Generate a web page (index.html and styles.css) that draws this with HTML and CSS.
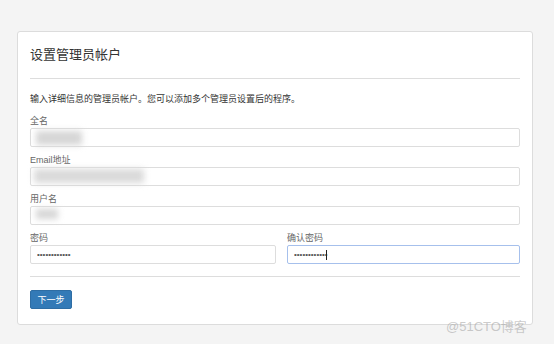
FILE: index.html
```html
<!DOCTYPE html>
<html lang="zh-CN">

<head>
  <meta charset="UTF-8">
  <title>设置管理员帐户</title>
  <link rel="stylesheet" href="styles.css">
</head>

<body>
  <div class="panel">
    <h2 class="title">设置管理员帐户</h2>
    <hr>
    <p class="intro">输入详细信息的管理员帐户。您可以添加多个管理员设置后的程序。</p>

    <!-- fields -->
    <div class="field">
      <label>全名</label>
      <div class="input-wrap">
        <input type="text" value="">
        <span class="smudge smudge-name"></span>
      </div>
    </div>
    <div class="field">
      <label>Email地址</label>
      <div class="input-wrap">
        <input type="text" value="">
        <span class="smudge smudge-mail"></span>
      </div>
    </div>
    <div class="field">
      <label>用户名</label>
      <div class="input-wrap">
        <input type="text" value="">
        <span class="smudge smudge-user"></span>
      </div>
    </div>
    <div class="field-row">
      <div class="field">
        <label>密码</label>
        <input type="password" value="xxxxxxxxxxxx">
      </div>
      <div class="field">
        <label>确认密码</label>
        <div class="input-wrap">
          <input class="focus" type="password" value="xxxxxxxxxxxx">
          <span class="caret"></span>
        </div>
      </div>
    </div>

    <hr class="bottom">
    <button class="btn-next">下一步</button>
  </div>

  <div class="watermark">@51CTO博客</div>
</body>

</html>
```

FILE: styles.css
```css
/* reset */
html,
body {
  margin: 0;
  padding: 0;
}

body {
  width: 554px;
  height: 344px;
  background: #f4f4f4;
  font-family: "Liberation Sans", "Noto Sans CJK SC", sans-serif;
  color: #333;
  overflow: hidden;
}

/* panel */
.panel {
  width: 490px;
  margin: 31px 0 0 17px;
  padding: 13px 12px 15px;
  background: #fff;
  border: 1px solid #dcdcdc;
  border-radius: 3px;
}

.title {
  margin: 0;
  font-size: 13px;
  font-weight: normal;
  line-height: 20px;
  color: #333;
}

hr {
  margin: 13px 0 14px;
  height: 0;
  border: 0;
  border-top: 1px solid #ddd;
}

hr.bottom {
  margin: 5px 0 13px;
}

.intro {
  margin: 0 0 10px;
  font-size: 9px;
  line-height: 12px;
  color: #333;
}

/* fields */
.field {
  margin-bottom: 7px;
}

.field label {
  display: block;
  margin-bottom: 1px;
  font-size: 9px;
  line-height: 12px;
  color: #666;
}

.field input {
  display: block;
  box-sizing: border-box;
  width: 100%;
  height: 19px;
  margin: 0;
  padding: 0 6px;
  border: 1px solid #ddd;
  border-radius: 2px;
  background: #fff;
  font-size: 8px;
  color: #555;
  outline: none;
}

.field input.focus {
  border: 1px solid #a6c0ec;
}

.field-row {
  display: grid;
  grid-template-columns: 246px 1fr;
  column-gap: 11px;
}

/* blurred redactions */
.input-wrap {
  position: relative;
}

.smudge {
  position: absolute;
  background: #d6d6d6;
  filter: blur(3px);
}

.smudge-name {
  left: 6px;
  top: 3px;
  width: 46px;
  height: 14px;
}

.smudge-mail {
  left: 4px;
  top: 2px;
  width: 110px;
  height: 14px;
  background: #dadada;
}

.smudge-user {
  left: 6px;
  top: 3px;
  width: 22px;
  height: 10px;
}

.caret {
  position: absolute;
  left: 39px;
  top: 5px;
  width: 1px;
  height: 10px;
  background: #222;
}

/* button */
.btn-next {
  display: block;
  width: 42px;
  height: 19px;
  padding: 0;
  border: 1px solid #2e6da4;
  border-radius: 2px;
  background: #337ab7;
  color: #fff;
  font-family: "Liberation Sans", "Noto Sans CJK SC", sans-serif;
  font-size: 9px;
  cursor: pointer;
}

.watermark {
  position: absolute;
  left: 446px;
  top: 316px;
  font-size: 13px;
  color: rgba(160, 160, 160, 0.55);
  font-family: "Liberation Sans", "Noto Sans CJK SC", sans-serif;
}
```
